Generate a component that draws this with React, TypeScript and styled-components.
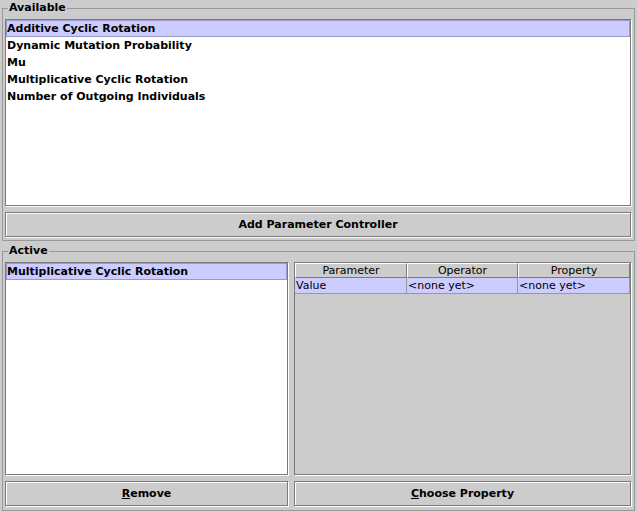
import React from "react";
import styled, { createGlobalStyle } from "styled-components";

const Global = createGlobalStyle`
  html, body { margin: 0; padding: 0; background: #cccccc; }
  * { box-sizing: border-box; }
`;

const Frame = styled.div`
  width: 637px;
  height: 511px;
  background: #cccccc;
  padding: 1px 2px 0 2px;
  display: flex;
  flex-direction: column;
  gap: 3px;
  font-family: "DejaVu Sans", "Liberation Sans", sans-serif;
  font-size: 11px;
  color: #000;
`;

const Group = styled.fieldset<{ $h: number }>`
  margin: 0;
  height: ${(p) => p.$h}px;
  border: 1px solid #999999;
  padding: 4px 2px 2px 2px;
  min-width: 0;
  display: flex;
  flex-direction: column;
  gap: 6px;
`;

const Legend = styled.legend`
  font-weight: bold;
  font-size: 11px;
  line-height: 14px;
  padding: 0 1px;
  margin-left: 3px;
`;

const ListBox = styled.div<{ $h: number }>`
  height: ${(p) => p.$h}px;
  background: #ffffff;
  border: 1px solid #7a7a7a;
  box-shadow: 1px 1px 0 #ffffff;
  margin-right: 1px;
  padding: 0;
  overflow: hidden;
  flex: 0 0 auto;
`;

const Item = styled.div<{ $sel?: boolean }>`
  height: 17px;
  line-height: 15px;
  padding: 0;
  font-weight: bold;
  white-space: nowrap;
  background: ${(p) => (p.$sel ? "#ccccff" : "transparent")};
  border: 1px solid ${(p) => (p.$sel ? "#9999cc" : "transparent")};
`;

const Button = styled.button`
  height: 25px;
  margin: 0 1px 1px 0;
  background: #cccccc;
  border: 1px solid #7a7a7a;
  box-shadow: inset 1px 1px 0 #ffffff, 1px 1px 0 #ffffff;
  font-family: inherit;
  font-size: 11px;
  font-weight: bold;
  color: #000;
  padding: 0;
  flex: 0 0 auto;
  width: calc(100% - 1px);
  u { text-decoration: underline; }
`;

const Split = styled.div`
  display: flex;
  gap: 5px;
`;

const LeftCol = styled.div`
  width: 284px;
  display: flex;
  flex-direction: column;
  gap: 6px;
`;

const RightCol = styled.div`
  flex: 1;
  display: flex;
  flex-direction: column;
  gap: 6px;
`;

const TablePane = styled.div`
  height: 213px;
  background: #cccccc;
  border: 1px solid #7a7a7a;
  box-shadow: 1px 1px 0 #ffffff;
  margin-right: 1px;
  padding: 0;
  overflow: hidden;
`;

const Grid = styled.div`
  display: grid;
  grid-template-columns: 112px 111px 112px;
`;

const HeadCell = styled.div`
  height: 15px;
  line-height: 13px;
  text-align: center;
  border: 1px solid #7a7a7a;
  border-left-color: #ffffff;
  border-top-color: #ffffff;
  background: #cccccc;
  white-space: nowrap;
`;

const Cell = styled.div`
  height: 16px;
  line-height: 15px;
  padding-left: 1px;
  background: #ccccff;
  border-right: 1px solid #999999;
  border-bottom: 1px solid #999999;
  white-space: nowrap;
`;

const available = [
  "Additive Cyclic Rotation",
  "Dynamic Mutation Probability",
  "Mu",
  "Multiplicative Cyclic Rotation",
  "Number of Outgoing Individuals",
];

export default function App() {
  return (
    <>
      <Global />
      <Frame>
        <Group $h={240}>
          <Legend>Available</Legend>
          <ListBox $h={187}>
            {available.map((t, i) => (
              <Item key={t} $sel={i === 0}>
                {t}
              </Item>
            ))}
          </ListBox>
          <Button>Add Parameter Controller</Button>
        </Group>
        <Group $h={267}>
          <Legend>Active</Legend>
          <Split>
            <LeftCol>
              <ListBox $h={213}>
                <Item $sel>Multiplicative Cyclic Rotation</Item>
              </ListBox>
              <Button>
                <u>R</u>emove
              </Button>
            </LeftCol>
            <RightCol>
              <TablePane>
                <Grid>
                  <HeadCell>Parameter</HeadCell>
                  <HeadCell>Operator</HeadCell>
                  <HeadCell>Property</HeadCell>
                  <Cell>Value</Cell>
                  <Cell>&lt;none yet&gt;</Cell>
                  <Cell>&lt;none yet&gt;</Cell>
                </Grid>
              </TablePane>
              <Button>
                <u>C</u>hoose Property
              </Button>
            </RightCol>
          </Split>
        </Group>
      </Frame>
    </>
  );
}
